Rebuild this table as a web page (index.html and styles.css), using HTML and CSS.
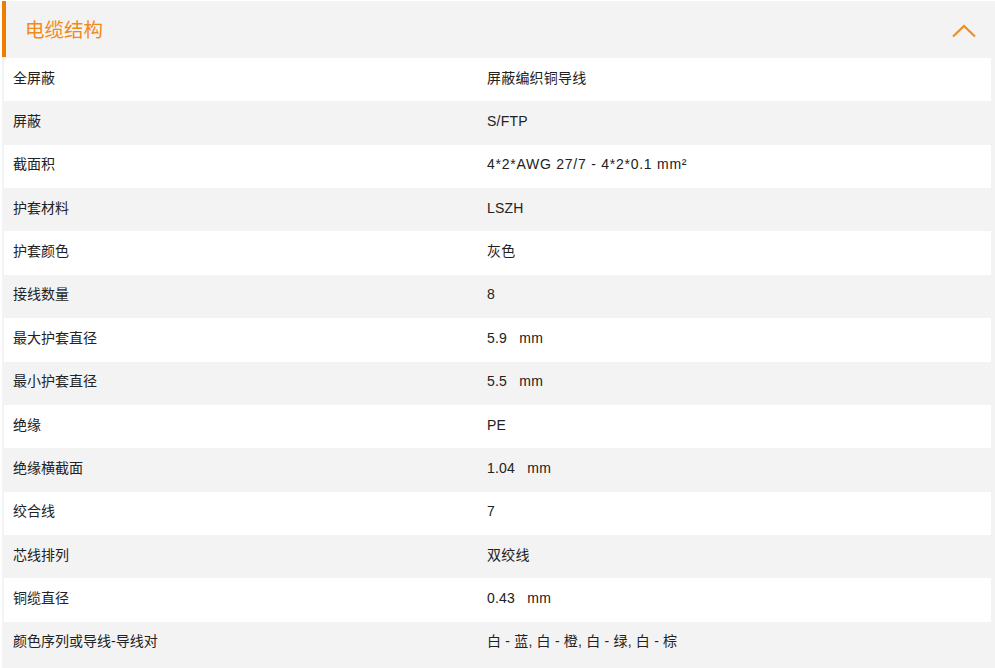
FILE: index.html
```html
<!DOCTYPE html>
<html lang="zh-CN">
<head>
<meta charset="utf-8">
<title>电缆结构</title>
<link rel="stylesheet" href="styles.css">
</head>
<body>
<section class="panel">
  <header class="panel-head">
    <h2 class="panel-title">电缆结构</h2>
    <svg class="chevron" width="26" height="14" viewBox="0 0 26 14" aria-hidden="true">
      <polyline points="2,12.5 13,2 24,12.5" fill="none" stroke="#f28a1b" stroke-width="2"/>
    </svg>
  </header>
  <div class="rows">
    <div class="row"><div class="cell label">全屏蔽</div><div class="cell value">屏蔽编织铜导线</div></div>
    <div class="row"><div class="cell label">屏蔽</div><div class="cell value">S/FTP</div></div>
    <div class="row"><div class="cell label">截面积</div><div class="cell value value-wide">4*2*AWG 27/7 - 4*2*0.1 mm²</div></div>
    <div class="row"><div class="cell label">护套材料</div><div class="cell value">LSZH</div></div>
    <div class="row"><div class="cell label">护套颜色</div><div class="cell value">灰色</div></div>
    <div class="row"><div class="cell label">接线数量</div><div class="cell value">8</div></div>
    <div class="row"><div class="cell label">最大护套直径</div><div class="cell value">5.9&nbsp;&nbsp; mm</div></div>
    <div class="row"><div class="cell label">最小护套直径</div><div class="cell value">5.5&nbsp;&nbsp; mm</div></div>
    <div class="row"><div class="cell label">绝缘</div><div class="cell value">PE</div></div>
    <div class="row"><div class="cell label">绝缘横截面</div><div class="cell value">1.04&nbsp;&nbsp; mm</div></div>
    <div class="row"><div class="cell label">绞合线</div><div class="cell value">7</div></div>
    <div class="row"><div class="cell label">芯线排列</div><div class="cell value">双绞线</div></div>
    <div class="row"><div class="cell label">铜缆直径</div><div class="cell value">0.43&nbsp;&nbsp; mm</div></div>
    <div class="row"><div class="cell label">颜色序列或导线-导线对</div><div class="cell value">白 - 蓝, 白 - 橙, 白 - 绿, 白 - 棕</div></div>
  </div>
</section>
</body>
</html>
```
FILE: styles.css
```css
html, body {
  margin: 0;
  padding: 0;
  background: #ffffff;
}
body {
  font-family: "Liberation Sans", "Noto Sans CJK SC", sans-serif;
  color: #222222;
}
.panel {
  margin: 1px 0 0 2px;
  background: #f3f3f3;
  padding: 0 4px 6px 0;
}
.panel-head {
  height: 56px;
  border-left: 4px solid #f07c00;
  display: flex;
  align-items: center;
  justify-content: space-between;
  padding: 0 14px 0 19px;
}
.panel-title {
  margin: 0;
  padding-top: 3px;
  font-size: 19.5px;
  font-weight: normal;
  color: #f28a1b;
  line-height: 1;
}
.chevron {
  display: block;
  margin-top: 4px;
}
.rows {
  padding-left: 2px;
  padding-top: 1px;
}
.row {
  display: grid;
  grid-template-columns: 474px 1fr;
  height: 43.36px;
  align-items: center;
  font-size: 14px;
  line-height: 20px;
}
.row:nth-child(odd) {
  background: #ffffff;
}
.row:nth-child(even) {
  background: #f3f3f3;
}
.cell {
  padding-left: 9px;
  padding-bottom: 4px;
}
.value {
  letter-spacing: 0.2px;
}
.value-wide {
  letter-spacing: 0.75px;
}
```
